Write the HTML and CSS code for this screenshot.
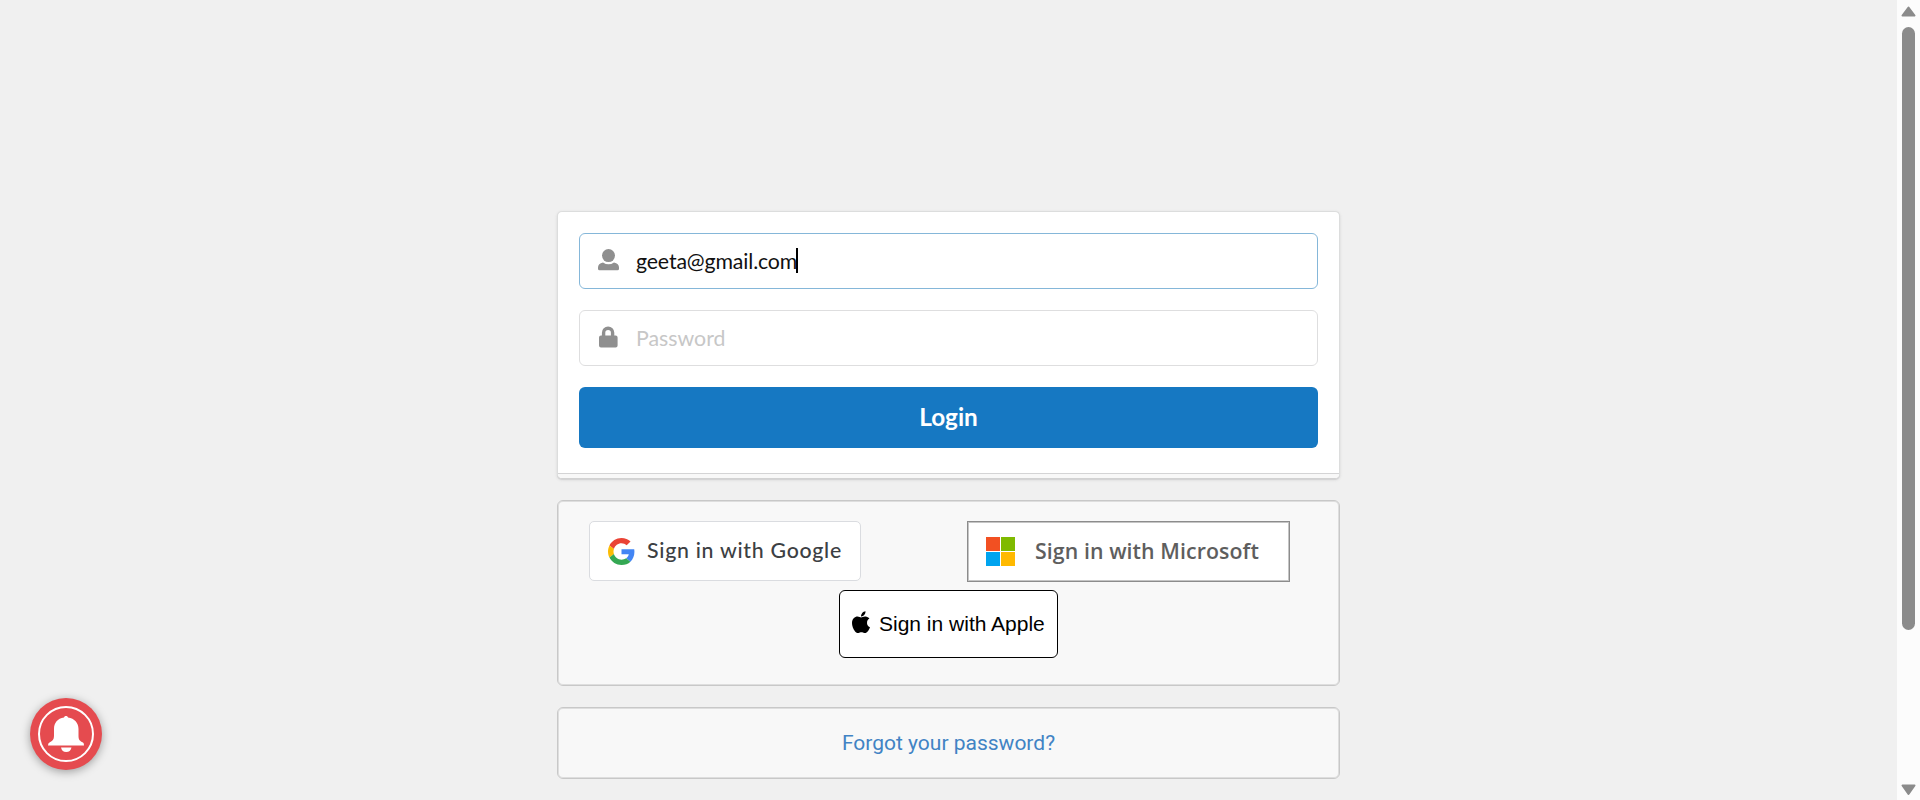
FILE: index.html
```html
<!DOCTYPE html>
<html lang="en">
<head>
<meta charset="utf-8">
<title>Login</title>
<link rel="stylesheet" href="styles.css">
</head>
<body>
<div class="page">
  <main class="content">
    <form class="card">
      <div class="fields">
        <div class="field focused">
          <svg class="field-icon" width="21" height="22" viewBox="0 0 21 22"><circle cx="10.5" cy="6.6" r="6.5"/><path d="M5 13.4 Q10.5 17.2 16 13.4 Q21 14.3 21 18.5 V19.8 Q21 21.3 19.5 21.3 H1.5 Q0 21.3 0 19.8 V18.5 Q0 14.3 5 13.4Z"/></svg>
          <span class="value">geeta@gmail.com</span><span class="caret"></span>
        </div>
        <div class="field">
          <svg class="field-icon" width="21" height="22" viewBox="0 0 21 22"><path fill-rule="evenodd" d="M3.9 9.4 V6.7 A6.2 6.2 0 0 1 16.3 6.7 V9.4 H17.6 Q19.6 9.4 19.6 11.4 V19.4 Q19.6 21.4 17.6 21.4 H3 Q1 21.4 1 19.4 V11.4 Q1 9.4 3 9.4Z M7.3 9.4 H12.9 V6.7 A2.8 2.8 0 0 0 7.3 6.7Z"/></svg>
          <span class="placeholder">Password</span>
        </div>
        <button class="login" type="button">Login</button>
      </div>
      <div class="card-foot"></div>
    </form>

    <section class="panel social">
      <div class="social-row">
        <a class="google">
          <svg width="27" height="27" viewBox="0 0 48 48"><path fill="#ea4335" d="M24 9.5c3.54 0 6.71 1.22 9.21 3.6l6.85-6.85C35.9 2.38 30.47 0 24 0 14.62 0 6.51 5.38 2.56 13.22l7.98 6.19C12.43 13.72 17.74 9.5 24 9.5z"/><path fill="#4285f4" d="M46.98 24.55c0-1.57-.15-3.09-.38-4.55H24v9.02h12.94c-.58 2.96-2.26 5.48-4.78 7.18l7.73 6c4.51-4.18 7.09-10.36 7.09-17.65z"/><path fill="#fbbc05" d="M10.53 28.59c-.48-1.45-.76-2.99-.76-4.59s.27-3.14.76-4.59l-7.98-6.19C.92 16.46 0 20.12 0 24s.92 7.54 2.56 10.78l7.97-6.19z"/><path fill="#34a853" d="M24 48c6.48 0 11.93-2.13 15.89-5.81l-7.73-6c-2.15 1.45-4.92 2.3-8.16 2.3-6.26 0-11.57-4.22-13.47-9.91l-7.98 6.19C6.51 42.62 14.62 48 24 48z"/></svg>
          <span class="google-text">Sign in with Google</span>
        </a>
        <a class="microsoft">
          <svg width="29" height="29" viewBox="0 0 29 29"><path fill="#f25022" d="M0 0h14v14H0z"/><path fill="#7fba00" d="M15 0h14v14H15z"/><path fill="#00a4ef" d="M0 15h14v14H0z"/><path fill="#ffb900" d="M15 15h14v14H15z"/></svg>
          <span class="microsoft-text">Sign in with Microsoft</span>
        </a>
      </div>
      <a class="apple">
        <svg width="18" height="22" viewBox="4 28.3 376.5 449" preserveAspectRatio="none"><path d="M318.7 268.700c-.2-36.700 16.400-64.400 50-84.800-18.800-26.900-47.200-41.700-84.700-44.600-35.500-2.800-74.300 20.700-88.500 20.700-15 0-49.400-19.700-76.400-19.700C63.300 141.200 4 184.800 4 273.500q0 39.300 14.400 81.200c12.800 36.700 59 126.700 107.200 125.200 25.200-.6 43-17.900 75.800-17.900 31.800 0 48.300 17.900 76.400 17.900 48.600-.7 90.400-82.500 102.600-119.300-65.200-30.700-61.700-90-61.700-91.900zm-56.600-164.200c27.300-32.400 24.800-61.900 24-72.500-24.100 1.400-52 16.400-67.900 34.900-17.500 19.800-27.800 44.300-25.600 71.900 26.100 2 49.900-11.400 69.500-34.300z"/></svg>
        <span class="apple-text">Sign in with Apple</span>
      </a>
    </section>

    <section class="panel forgot"><a class="forgot-link">Forgot your password?</a></section>
  </main>
  <aside class="scrollbar">
    <svg class="arrow" width="15" height="11" viewBox="0 0 15 11"><path d="M7.500 1.500 L13.500 9.500 H1.500Z"/></svg>
    <div class="thumb"></div>
    <svg class="arrow" width="15" height="12" viewBox="0 0 15 12"><path d="M1.500 1.500 H13.500 L7.500 10Z"/></svg>
  </aside>
</div>
<div class="bell">
  <svg width="72" height="72" viewBox="0 0 72 72"><circle cx="36" cy="36" r="27" fill="none" stroke="#fff" stroke-width="2"/><path fill="#fff" d="M34 19.500 C34.300 17.500 37.700 17.500 38 19.500 C44.500 20.300 48.500 25 48.500 31 V38 C48.500 42 50 43 53 44.500 Q54 45 54 47.600 H18 Q18 45 19.500 44.500 C22.500 43 24 41.500 24 38 V31 C24 25 27.500 20.300 34 19.500Z M31 49.500 H41.500 Q40.500 54 36.200 54 Q32 54 31 49.500Z"/></svg>
</div>
</body>
</html>
```

FILE: styles.css
```css
* { box-sizing: border-box; }
html, body { height: 800px; }
body { margin: 0; background: #f0f0f0; overflow: hidden; }
svg { display: block; flex: none; }
.page { display: flex; height: 800px; }
.content { flex: 1; display: flex; flex-direction: column; align-items: center; padding-top: 211px; }
.card { width: 783px; height: 268px; border: 1px solid #dcdddd; border-bottom-color: #d2d2d2; border-radius: 5px; background: #fff; box-shadow: 0 1px 3px #d4d4d5, 0 1px 0 #d4d4d5; display: flex; flex-direction: column; overflow: hidden; }
.fields { flex: 1; padding: 21px; display: flex; flex-direction: column; gap: 21px; }
.field { height: 56px; flex: none; border: 1px solid #dededf; border-radius: 6px; display: flex; align-items: center; padding: 0 0 1px 18px; font: 21.3px/26px Lato, sans-serif; color: #111; }
.focused { border-color: #85b7d9; }
.field-icon { fill: #8f8f8f; margin: 0 17px 1px 0; }
.value { letter-spacing: -0.14px; }
.placeholder { color: #c7c7c7; }
.caret { width: 2px; height: 25px; background: #000; margin-bottom: 1px; margin-left: -1px; }
.login { height: 61px; flex: none; border: 0; border-radius: 6px; background: #1678c2; color: #fff; font: 700 24.3px/60px Lato, sans-serif; padding: 0 0 1px; }
.card-foot { height: 5px; border-top: 1px solid #d4d4d5; background: #f8f8f8; }
.panel { width: 783px; border: 1px solid #c8c8c8; border-radius: 6px; background: #f8f8f8; box-shadow: inset 0 0 0 1px #dedede; }
.social { height: 186px; margin-top: 21px; padding: 20px 30px; display: flex; flex-direction: column; align-items: center; gap: 8px; }
.social-row { align-self: stretch; display: flex; justify-content: space-between; padding: 0 19px 0 1px; height: 61px; }
.google { width: 272px; height: 60px; border: 1px solid #dadce0; border-radius: 5px; background: #fff; display: flex; align-items: center; padding-left: 18px; gap: 12px; }
.google-text { font: 500 21.3px/28px Lato, sans-serif; color: #3c4043; white-space: nowrap; letter-spacing: 0.72px; margin-bottom: 2px; }
.microsoft { width: 323px; height: 61px; border: 1px solid #8c8c8c; box-shadow: inset 0 0 0 1px #c5c5c5; background: #fff; display: flex; align-items: center; padding-left: 18px; gap: 20px; }
.microsoft-text { font: 600 21.3px/28px "Open Sans", sans-serif; color: #5e5e5e; white-space: nowrap; letter-spacing: 0.08px; margin-bottom: 1px; }
.apple { width: 219px; height: 68px; border: 1px solid #000; border-radius: 6px; background: #fff; display: flex; align-items: center; padding-left: 12px; gap: 9px; }
.apple svg { margin-bottom: 4px; }
.apple-text { font: 21px/26px "Liberation Sans", Arial, sans-serif; color: #000; white-space: nowrap; }
.forgot { height: 72px; margin-top: 21px; display: flex; align-items: center; justify-content: center; }
.forgot-link { font: 21px/28px Roboto, sans-serif; color: #4183c4; }
.scrollbar { width: 23px; background: #fcfcfc; display: flex; flex-direction: column; align-items: center; padding: 6px 0 4px; }
.arrow { fill: #8b8b8b; stroke: #8b8b8b; stroke-width: 2; stroke-linejoin: round; }
.thumb { width: 13px; height: 603px; margin: 10px 0 auto; border-radius: 7px; background: #8b8b8b; }
.bell { position: absolute; left: 30px; top: 698px; width: 72px; height: 72px; border-radius: 50%; background: #e54b4f; box-shadow: 0 2px 10px rgba(0,0,0,.35); }
```
